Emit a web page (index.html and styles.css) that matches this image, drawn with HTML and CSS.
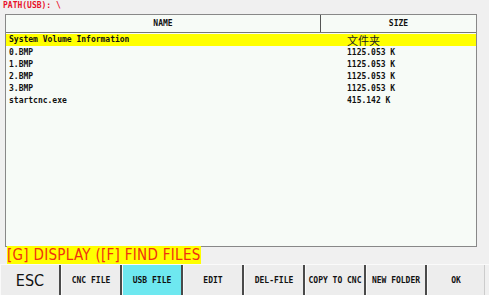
FILE: index.html
```html
<!DOCTYPE html>
<html lang="en">
<head>
    <meta charset="UTF-8">
    <title>USB Files</title>
    <link rel="stylesheet" href="styles.css">
</head>
<body>
    <div class="path">PATH(USB): \</div>

    <div class="panel">
        <div class="head">
            <div class="head-name">NAME</div>
            <div class="head-size">SIZE</div>
        </div>
        <div class="file-row selected">
            <span class="file-name">System Volume Information</span>
            <span class="file-size cjk">文件夹</span>
        </div>
        <div class="file-row">
            <span class="file-name">0.BMP</span>
            <span class="file-size">1125.053 K</span>
        </div>
        <div class="file-row">
            <span class="file-name">1.BMP</span>
            <span class="file-size">1125.053 K</span>
        </div>
        <div class="file-row">
            <span class="file-name">2.BMP</span>
            <span class="file-size">1125.053 K</span>
        </div>
        <div class="file-row">
            <span class="file-name">3.BMP</span>
            <span class="file-size">1125.053 K</span>
        </div>
        <div class="file-row">
            <span class="file-name">startcnc.exe</span>
            <span class="file-size">415.142 K</span>
        </div>
    </div>

    <div class="status"><span class="status-text">[G] DISPLAY ([F] FIND FILES</span></div>

    <div class="buttons">
        <button class="key key-big">ESC</button>
        <button class="key">CNC FILE</button>
        <button class="key active">USB FILE</button>
        <button class="key">EDIT</button>
        <button class="key">DEL-FILE</button>
        <button class="key">COPY TO CNC</button>
        <button class="key">NEW FOLDER</button>
        <button class="key">OK</button>
    </div>
</body>
</html>
```

FILE: styles.css
```css
body {
    margin: 0;
    width: 489px;
    height: 295px;
    background-color: #f0f0f0;
    font-family: "DejaVu Sans Mono", "Liberation Mono", monospace;
    font-size: 8px;
    font-weight: bold;
    color: #111;
    overflow: hidden;
}
.path {
    height: 14px;
    line-height: 12px;
    padding-left: 3px;
    color: #e8102a;
}
.panel {
    margin-left: 5px;
    width: 470px;
    height: 231px;
    border: 1px solid #888;
    background-color: #f7fbf7;
}
.head {
    display: flex;
    height: 17px;
    line-height: 17px;
    border-bottom: 1px solid #777;
    text-align: center;
}
.head-name {
    width: 314px;
    border-right: 1px solid #555;
}
.head-size {
    flex: 1;
}
.file-row {
    display: flex;
    height: 12px;
    line-height: 12px;
}
.file-row.selected {
    background-color: #ffff00;
    margin-top: 1px;
    margin-bottom: 1px;
}
.file-name {
    width: 338px;
    padding-left: 3px;
}
.file-size {
    flex: 1;
}
.cjk {
    font-family: "Noto Sans CJK SC", sans-serif;
    font-weight: normal;
    font-size: 11px;
    color: #222;
}
.status {
    height: 17px;
    padding-left: 7px;
}
.status-text {
    background-color: #ffff00;
    color: #f03010;
    font-family: "DejaVu Sans Condensed", "Liberation Sans", sans-serif;
    font-weight: normal;
    font-size: 15px;
    line-height: 16px;
    letter-spacing: 0.3px;
}
.buttons {
    display: flex;
    height: 31px;
    border-top: 1px solid #fafafa;
}
.key {
    width: 61px;
    height: 31px;
    margin: 0;
    padding: 0;
    background-color: #ededed;
    border: none;
    border-left: 1px solid #fafafa;
    border-right: 2px solid #4a4a4a;
    border-bottom: 1px solid #999;
    font-family: "DejaVu Sans Mono", "Liberation Mono", monospace;
    font-size: 8px;
    font-weight: bold;
    color: #111;
}
.key:last-child {
    width: 58px;
    border-right: 1px solid #ccc;
}
.key-big {
    font-family: "DejaVu Sans Condensed", "Liberation Sans", sans-serif;
    font-weight: normal;
    font-size: 16px;
}
.active {
    background-color: #6ee8f0;
}
```
